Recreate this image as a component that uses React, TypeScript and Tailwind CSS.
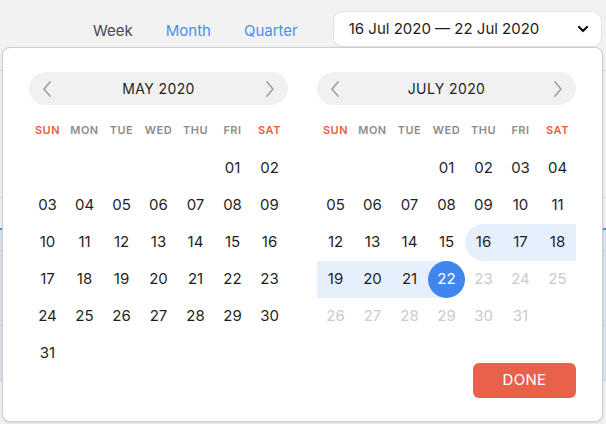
import React from "react";

type Cell = { d: number; muted?: boolean; range?: "start" | "mid" | "end" };

const dayNames = ["SUN", "MON", "TUE", "WED", "THU", "FRI", "SAT"];

const pad = (n: number) => (n < 10 ? `0${n}` : `${n}`);

function buildMay(): (Cell | null)[] {
  const cells: (Cell | null)[] = [null, null, null, null, null];
  for (let d = 1; d <= 31; d++) cells.push({ d });
  return cells;
}

function buildJuly(): (Cell | null)[] {
  const cells: (Cell | null)[] = [null, null, null];
  for (let d = 1; d <= 31; d++) {
    let range: Cell["range"];
    if (d === 16) range = "start";
    else if (d > 16 && d < 22) range = "mid";
    else if (d === 22) range = "end";
    cells.push({ d, muted: d > 22, range });
  }
  return cells;
}

function Chevron({ dir }: { dir: "left" | "right" }) {
  return (
    <svg width="12" height="18" viewBox="0 0 12 18" fill="none">
      <polyline
        points={dir === "left" ? "9,2 3,9 9,16" : "3,2 9,9 3,16"}
        stroke="#a3a3a3"
        strokeWidth="1.8"
        strokeLinecap="round"
        strokeLinejoin="round"
      />
    </svg>
  );
}

function DayCell({ cell }: { cell: Cell | null }) {
  if (!cell) return <div className="h-[37px]" />;
  const label = pad(cell.d);
  if (cell.range === "end") {
    return (
      <div className="h-[37px] flex items-center justify-center bg-[linear-gradient(to_right,#e6f0fc_50%,transparent_50%)]">
        <div className="w-[37px] h-[37px] rounded-full bg-[#3f87ef] flex items-center justify-center text-white text-[15px]">
          {label}
        </div>
      </div>
    );
  }
  const bg =
    cell.range === "start"
      ? "bg-[#e6f0fc] rounded-l-full"
      : cell.range === "mid"
      ? "bg-[#e6f0fc]"
      : "";
  return (
    <div
      className={`h-[37px] flex items-center justify-center text-[15px] ${bg} ${
        cell.muted ? "text-[#cbcbcb]" : "text-[#1f1f1f]"
      }`}
    >
      {label}
    </div>
  );
}

function Month({ title, cells, footer }: { title: string; cells: (Cell | null)[]; footer?: React.ReactNode }) {
  return (
    <div className="w-[259px] flex flex-col">
      <div className="h-[33px] rounded-full bg-[#f1f1f1] flex items-center justify-between px-[12px]">
        <Chevron dir="left" />
        <span className="text-[14px] tracking-[0.4px] text-[#1f1f1f]">{title}</span>
        <Chevron dir="right" />
      </div>
      <div className="grid grid-cols-7 h-[24px] mt-[13px] items-center">
        {dayNames.map((n, i) => (
          <div
            key={n}
            className={`text-center text-[11px] font-semibold tracking-[0.5px] ${
              i === 0 || i === 6 ? "text-[#ef5a44]" : "text-[#8c8c8c]"
            }`}
          >
            {n}
          </div>
        ))}
      </div>
      <div className="grid grid-cols-7 mt-[8px]">
        {cells.map((c, i) => (
          <DayCell key={i} cell={c} />
        ))}
      </div>
      {footer}
    </div>
  );
}

export default function App() {
  return (
    <div className="relative w-[606px] h-[424px] overflow-hidden bg-[#f2f2f2] font-['Inter',sans-serif]">
      {/* top bar */}
      <div className="h-[47px] flex items-start pt-[11px]">
        <div className="flex items-center h-[35px] mt-[3px] pl-[93px] gap-[33px] text-[15px]">
          <span className="text-[#474747]">Week</span>
          <span className="text-[#4b8ef3]">Month</span>
          <span className="text-[#4b8ef3]">Quarter</span>
        </div>
        <div className="ml-[35px] w-[269px] h-[36px] rounded-[10px] bg-white border border-[#e2e2e2] flex items-center justify-between pl-[15px] pr-[12px]">
          <span className="text-[15px] text-[#1c1c1c]">16 Jul 2020 — 22 Jul 2020</span>
          <svg width="12" height="8" viewBox="0 0 12 8" fill="none">
            <polyline points="2,2 6,6 10,2" stroke="#111" strokeWidth="2.2" strokeLinecap="round" strokeLinejoin="round" />
          </svg>
        </div>
      </div>

      {/* page content behind the popover */}
      <div className="flex flex-col">
        <div className="h-[23px]" />
        <div className="h-[127px] border-t border-[#dcdcdc]" />
        <div className="h-[31px] border-t border-[#dcdcdc]" />
        <div className="h-[22px] border-t-2 border-[#4a8ff5] bg-[#dbe3ee]" />
        <div className="h-[75px] border-t border-[#c9d2de] bg-[#dbe3ee]" />
        <div className="h-[55px] border-t border-[#c9d2de] bg-[#dbe3ee]" />
        <div className="h-[40px] border-t border-[#d6d6d6]" />
      </div>

      {/* date picker popover */}
      <div className="absolute left-[2px] top-[47px] w-[601px] h-[375px] bg-white rounded-[8px] border border-[#cfcfcf] shadow-[0_1px_3px_rgba(0,0,0,0.12)] pt-[24px] pl-[26px] flex gap-[29px]">
        <Month title="MAY 2020" cells={buildMay()} />
        <Month
          title="JULY 2020"
          cells={buildJuly()}
          footer={
            <div className="flex justify-end mt-[28px]">
              <button className="w-[103px] h-[35px] rounded-[6px] bg-[#e9604b] text-white text-[15px] tracking-[0.3px]">
                DONE
              </button>
            </div>
          }
        />
      </div>
    </div>
  );
}
